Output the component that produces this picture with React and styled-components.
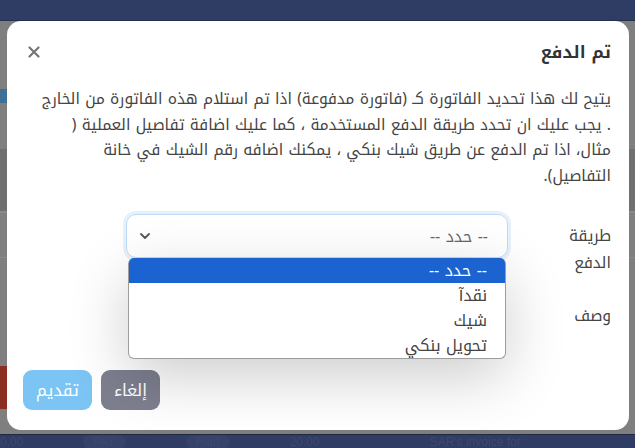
import React from "react";
import styled, { createGlobalStyle } from "styled-components";

const GlobalStyle = createGlobalStyle`
  html, body { margin: 0; padding: 0; background: #7f7f7f; }
  body { font-family: "Noto Kufi Arabic", "Noto Sans Arabic", "DejaVu Sans", sans-serif; }
  * { box-sizing: border-box; }
`;

const Screen = styled.div`
  width: 635px;
  height: 448px;
  display: grid;
  grid-template-rows: 21px 1fr 14px;
  background: #7f7f7f;
  overflow: hidden;
`;

const TopBar = styled.div`
  background: #2f3d64;
  border-bottom: 1px solid #242f4c;
`;

const Middle = styled.div`
  display: grid;
  grid-template-columns: 7px 1fr 6px;
  padding-bottom: 4px;
`;

const Gutter = styled.div`
  background:
    linear-gradient(to bottom,
      transparent 0 68px,
      ${(p) => (p.$left ? "#3f7198" : "transparent")} 68px 82px,
      transparent 82px 128px,
      #6f6f6f 128px 190px,
      #8a8a8a 190px 192px,
      transparent 192px 236px,
      #8a8a8a 236px 237px,
      transparent 237px 345px,
      ${(p) => (p.$left ? "#8b2f25" : "transparent")} 345px 388px,
      transparent 388px);
`;

const BottomBar = styled.div`
  background: #2f3d64;
  border-top: 1px solid #1f2944;
  display: flex;
  align-items: center;
  gap: 60px;
  overflow: hidden;
  color: #3d496e;
  font-family: "Liberation Sans", sans-serif;
  font-size: 12px;
  filter: blur(0.6px);
`;

const Ghost = styled.span`
  white-space: nowrap;
  margin-left: ${(p) => p.$ml || 0}px;
  ${(p) => p.$pill && `background:#36426a; border-radius: 8px; padding: 0 10px;`}
`;

const Modal = styled.div`
  direction: rtl;
  background: #fff;
  border-radius: 14px;
  display: flex;
  flex-direction: column;
  padding: 17px 18px 20px 16px;
  position: relative;
`;

const Header = styled.div`
  display: flex;
  justify-content: space-between;
  align-items: center;
  height: 28px;
`;

const Title = styled.h5`
  margin: 0;
  font-size: 17px;
  font-weight: 700;
  color: #333;
  line-height: 28px;
`;

const Close = styled.button`
  border: 0;
  background: none;
  padding: 0;
  margin-left: 4px;
  width: 14px;
  height: 14px;
  display: flex;
  align-items: center;
  justify-content: center;
`;

const Desc = styled.p`
  margin: 21px 0 0 2px;
  font-size: 15.5px;
  line-height: 25.5px;
  color: #444;
  white-space: nowrap;
`;

const FormRow = styled.div`
  display: grid;
  grid-template-columns: 60px 382px;
  column-gap: 43px;
  margin-top: ${(p) => p.$mt}px;
`;

const Label = styled.label`
  font-size: 15.5px;
  line-height: 27px;
  color: #444;
  padding-top: 9px;
  width: 50px;
`;

const SelectWrap = styled.div`
  position: relative;
  height: ${(p) => p.$h}px;
`;

const SelectBox = styled.div`
  height: 44px;
  border: 1px solid #bcd9f5;
  border-radius: 10px;
  box-shadow: 0 0 0 3px rgba(120, 175, 235, 0.18);
  display: flex;
  align-items: center;
  justify-content: space-between;
  padding: 0 19px 0 12px;
  font-size: 16px;
  color: #666;
`;

const DropList = styled.ul`
  position: absolute;
  top: 44px;
  left: 2px;
  right: 2px;
  margin: 0;
  padding: 0;
  list-style: none;
  background: #fff;
  border: 1px solid #9d9d9d;
  border-top: 0;
  border-radius: 6px;
  box-shadow: 0 18px 60px rgba(0, 0, 0, 0.2);
  z-index: 5;
`;

const Option = styled.li`
  height: 25px;
  line-height: 25px;
  padding-right: 18px;
  font-size: 16px;
  color: ${(p) => (p.$active ? "#fff" : "#444")};
  background: ${(p) => (p.$active ? "#1b63d0" : "transparent")};
  border-radius: ${(p) => (p.$active ? "5px 5px 0 0" : "0")};
`;

const Footer = styled.div`
  margin-top: auto;
  display: flex;
  justify-content: flex-end;
  gap: 9px;
`;

const Button = styled.button`
  height: 40px;
  border: 0;
  border-radius: 9px;
  padding: 0 13px;
  font-family: inherit;
  font-size: 16.5px;
  color: #fff;
  background: ${(p) => (p.$variant === "primary" ? "#7cc4f3" : "#7e7f8f")};
`;

const Chevron = () => (
  <svg width="12" height="8" viewBox="0 0 12 8">
    <path d="M2 2 L6 6 L10 2" fill="none" stroke="#555" strokeWidth="1.8" strokeLinecap="round" strokeLinejoin="round" />
  </svg>
);

const XIcon = () => (
  <svg width="12" height="12" viewBox="0 0 12 12">
    <path d="M1.5 1.5 L10.5 10.5 M10.5 1.5 L1.5 10.5" stroke="#777" strokeWidth="2.2" strokeLinecap="round" />
  </svg>
);

const options = ["-- حدد --", "نقدآ", "شيك", "تحويل بنكي"];

export default function App() {
  return (
    <>
      <GlobalStyle />
      <Screen>
        <TopBar />
        <Middle>
          <Gutter $left />
          <Modal>
            <Header>
              <Title>تم الدفع</Title>
              <Close aria-label="close"><XIcon /></Close>
            </Header>
            <Desc>
              يتيح لك هذا تحديد الفاتورة كـ (فاتورة مدفوعة) اذا تم استلام هذه الفاتورة من الخارج
              <br />. يجب عليك ان تحدد طريقة الدفع المستخدمة ، كما عليك اضافة تفاصيل العملية (
              <br />مثال، اذا تم الدفع عن طريق شيك بنكي ، يمكنك اضافه رقم الشيك في خانة
              <br />التفاصيل).
            </Desc>
            <FormRow $mt={25}>
              <Label>طريقة الدفع</Label>
              <SelectWrap $h={44}>
                <SelectBox>
                  <span>-- حدد --</span>
                  <Chevron />
                </SelectBox>
                <DropList>
                  {options.map((o, i) => (
                    <Option key={o} $active={i === 0}>{o}</Option>
                  ))}
                </DropList>
              </SelectWrap>
            </FormRow>
            <FormRow $mt={17}>
              <Label>وصف</Label>
              <SelectWrap $h={40} />
            </FormRow>
            <Footer>
              <Button>إلغاء</Button>
              <Button $variant="primary">تقديم</Button>
            </Footer>
          </Modal>
          <Gutter />
        </Middle>
        <BottomBar>
          <Ghost>0.00</Ghost>
          <Ghost $pill>PAY</Ghost>
          <Ghost $pill>Paid</Ghost>
          <Ghost>20.00</Ghost>
          <Ghost $ml={50}>SAR's invoice for</Ghost>
        </BottomBar>
      </Screen>
    </>
  );
}
